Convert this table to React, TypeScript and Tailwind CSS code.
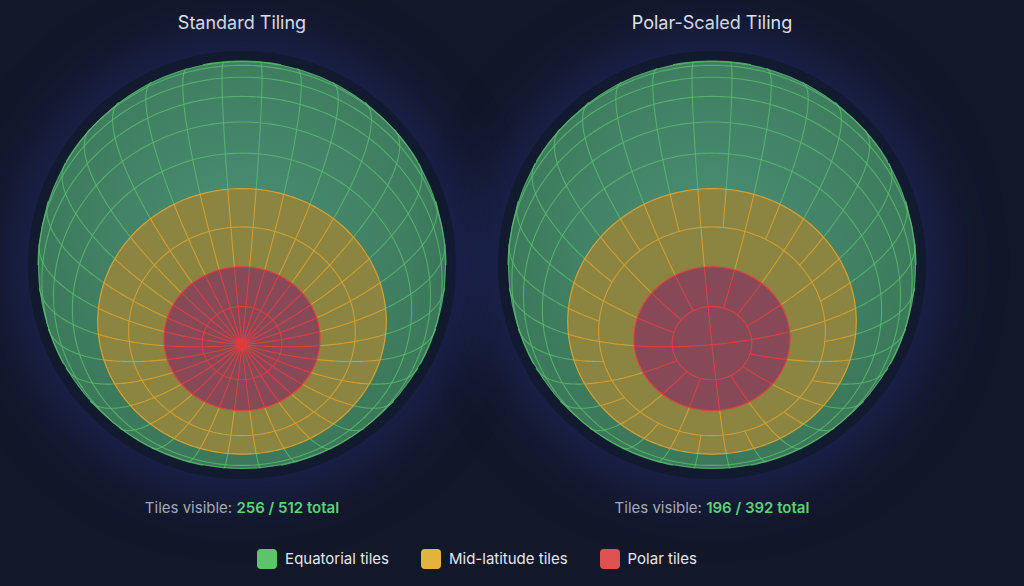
import React from 'react';

type Mode = 'standard' | 'polar';

// sphere geometry, in svg units
const R = 204;
const CX = 214;
const CY = 214;
const TILT = (23 * Math.PI) / 180;
const D2R = Math.PI / 180;
const LON0 = -5.625;

interface Pt {
  x: number;
  y: number;
  z: number;
}

const project = (aDeg: number, lDeg: number): Pt => {
  const a = aDeg * D2R;
  const l = lDeg * D2R;
  return {
    x: CX + R * Math.sin(a) * Math.sin(l),
    y: CY + R * (Math.cos(a) * Math.sin(TILT) - Math.sin(a) * Math.cos(l) * Math.cos(TILT)),
    z: Math.cos(a) * Math.cos(TILT) + Math.sin(a) * Math.cos(l) * Math.sin(TILT),
  };
};

const toPath = (pts: Pt[], close = false) => {
  let d = '';
  let pen = false;
  for (const p of pts) {
    if (p.z >= -0.001) {
      d += `${pen ? 'L' : 'M'}${p.x.toFixed(2)} ${p.y.toFixed(2)} `;
      pen = true;
    } else {
      pen = false;
    }
  }
  return close ? d + 'Z' : d;
};

const latCircle = (a: number, close = false) => {
  const pts: Pt[] = [];
  for (let l = -180; l <= 180; l += 1.5) pts.push(project(a, l));
  return toPath(pts, close);
};

const meridians = (n: number, a0: number, a1: number) => {
  const out: string[] = [];
  for (let k = 0; k < n; k++) {
    const l = LON0 + (k * 360) / n;
    const pts: Pt[] = [];
    for (let a = a0; a < a1; a += 1) pts.push(project(a, l));
    pts.push(project(a1, l));
    out.push(toPath(pts));
  }
  return out;
};

const Globe = ({ mode }: { mode: Mode }) => {
  const greenLines: string[] = [];
  for (let k = 5; k <= 15; k++) greenLines.push(latCircle(k * 11.25));
  greenLines.push(...meridians(32, 45, 180));

  const yellowLines: string[] = [latCircle(33.75)];
  const redLines: string[] = [latCircle(11.25)];
  if (mode === 'standard') {
    yellowLines.push(...meridians(32, 22.5, 45));
    redLines.push(...meridians(32, 0, 22.5));
  } else {
    yellowLines.push(...meridians(16, 22.5, 33.75), ...meridians(32, 33.75, 45));
    redLines.push(...meridians(4, 0, 11.25), ...meridians(16, 11.25, 22.5));
  }
  const pole = project(0, 0);
  const gid = `sphere-${mode}`;

  return (
    <div className="w-[428px] h-[428px] rounded-full bg-[#111a2e] shadow-[0_0_55px_18px_rgba(36,46,112,0.55)]">
      <svg width="428" height="428" viewBox="0 0 428 428">
        <defs>
          <radialGradient id={gid} cx="50%" cy="42%" r="55%">
            <stop offset="0%" stopColor="#4a8f75" />
            <stop offset="100%" stopColor="#3c785a" />
          </radialGradient>
        </defs>
        <circle cx={CX} cy={CY} r={R} fill={`url(#${gid})`} />
        <g fill="none" stroke="#58bd6d" strokeWidth="1.1" strokeOpacity="0.8">
          {greenLines.map((d, i) => (
            <path key={i} d={d} />
          ))}
        </g>
        <circle cx={CX} cy={CY} r={R - 0.5} fill="none" stroke="#58bd6d" strokeOpacity="0.7" strokeWidth="1" />

        <path d={latCircle(45, true)} fill="#8b8541" stroke="#d9a12f" strokeWidth="1.2" />
        <g fill="none" stroke="#d9a12f" strokeWidth="1.1" strokeOpacity="0.9">
          {yellowLines.map((d, i) => (
            <path key={i} d={d} />
          ))}
        </g>

        <path d={latCircle(22.5, true)} fill="#874858" stroke="#e2403f" strokeWidth="1.2" />
        <g fill="none" stroke="#e2403f" strokeWidth="1.1" strokeOpacity="0.9">
          {redLines.map((d, i) => (
            <path key={i} d={d} />
          ))}
        </g>
        {mode === 'standard' && <circle cx={pole.x} cy={pole.y} r="3.5" fill="#e23b36" />}
      </svg>
    </div>
  );
};

const Column = ({ title, mode, count }: { title: string; mode: Mode; count: string }) => (
  <div className="w-[440px] flex flex-col items-center">
    <h2 className="h-[24px] text-[18px] leading-[24px] text-[#f8fafc]">{title}</h2>
    <div className="mt-[16px]">
      <Globe mode={mode} />
    </div>
    <p className="mt-[19px] text-[15px] leading-[20px] text-[#a3aab8]">
      Tiles visible: <span className="font-semibold text-[#5cd375]">{count}</span>
    </p>
  </div>
);

const legend = [
  { label: 'Equatorial tiles', color: 'bg-[#5ec46c]' },
  { label: 'Mid-latitude tiles', color: 'bg-[#e2b43c]' },
  { label: 'Polar tiles', color: 'bg-[#e05252]' },
];

export default function App() {
  return (
    <div className="min-h-screen bg-[#121729] font-['Inter','Noto_Sans',sans-serif]">
      <div className="w-[954px] flex flex-col items-center pt-[11px]">
        <div className="flex gap-[30px]">
          <Column title="Standard Tiling" mode="standard" count="256 / 512 total" />
          <Column title="Polar-Scaled Tiling" mode="polar" count="196 / 392 total" />
        </div>
        <div className="mt-[31px] flex items-center gap-[32px]">
          {legend.map((item) => (
            <div key={item.label} className="flex items-center gap-[8px]">
              <span className={`w-[20px] h-[20px] rounded-[4px] ${item.color}`} />
              <span className="text-[15px] leading-[20px] text-[#e5e7eb]">{item.label}</span>
            </div>
          ))}
        </div>
      </div>
    </div>
  );
}
